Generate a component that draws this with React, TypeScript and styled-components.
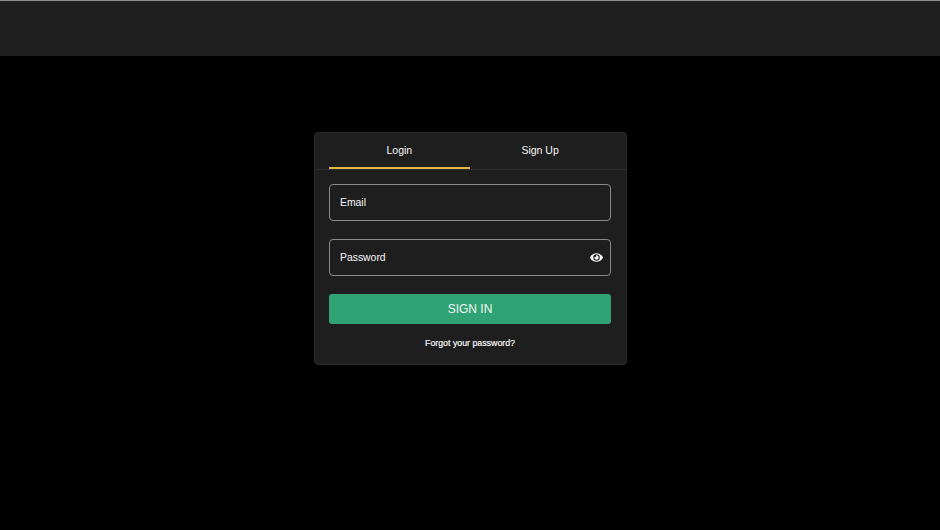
import React from "react";
import styled, { createGlobalStyle } from "styled-components";
import { FaEye } from "react-icons/fa";

const Global = createGlobalStyle`
  html, body { margin: 0; padding: 0; height: 100%; background: #000; }
  body { font-family: "Liberation Sans", Arial, sans-serif; overflow: hidden; }
  #root { height: 100%; }
`;
const Page = styled.div`
  height: 530px;
  display: flex;
  flex-direction: column;
  background: #000;
`;
const TopBar = styled.header`
  height: 55px;
  flex: none;
  background: #1f1f1f;
  border-top: 1px solid #8f8f8f;
`;
const Main = styled.main`
  display: flex;
  justify-content: center;
  padding-top: 76px;
  padding-left: 1px;
`;
const Card = styled.section`
  box-sizing: border-box;
  width: 313px;
  height: 233px;
  background: #1e1e1e;
  border: 1px solid #2b2b2b;
  border-radius: 4px;
`;
const Tabs = styled.nav`
  box-sizing: border-box;
  height: 37px;
  padding: 0 15.5px 0 14px;
  display: flex;
  border-bottom: 1px solid #303030;
`;
const Tab = styled.div<{ $active?: boolean }>`
  flex: 1;
  box-sizing: border-box;
  height: 36px;
  display: flex;
  align-items: center;
  justify-content: center;
  font-size: 10.5px;
  color: #f6f6f6;
  border-bottom: 2px solid ${(p) => (p.$active ? "#e0b63c" : "transparent")};
`;
const Form = styled.form`
  display: flex;
  flex-direction: column;
  padding: 14px 15px 0 14px;
`;
const Field = styled.div`
  box-sizing: border-box;
  height: 37px;
  margin-bottom: 18px;
  padding: 0 7px 0 10px;
  display: flex;
  align-items: center;
  justify-content: space-between;
  border: 1px solid #8a8a8a;
  border-radius: 4px;
  font-size: 10.4px;
  color: #f6f6f6;
`;
const Eye = styled(FaEye)`
  width: 13px;
  height: 13px;
  color: #f4f4f4;
`;
const Submit = styled.button`
  height: 30px;
  border: none;
  border-radius: 3px;
  background: #30a375;
  color: #f0f6f3;
  font-family: inherit;
  font-size: 12px;
  padding: 0 0 1px;
`;
const Forgot = styled.a`
  margin-top: 13px;
  text-align: center;
  font-size: 8.8px;
  line-height: 13px;
  color: #f4f4f4;
  -webkit-text-stroke: 0.2px #f4f4f4;
`;

export default function App() {
  return (
    <Page>
      <Global />
      <TopBar />
      <Main>
        <Card>
          <Tabs>
            <Tab $active>Login</Tab>
            <Tab>Sign Up</Tab>
          </Tabs>
          <Form>
            <Field>Email</Field>
            <Field>
              Password
              <Eye />
            </Field>
            <Submit type="button">SIGN IN</Submit>
            <Forgot>Forgot your password?</Forgot>
          </Form>
        </Card>
      </Main>
    </Page>
  );
}
